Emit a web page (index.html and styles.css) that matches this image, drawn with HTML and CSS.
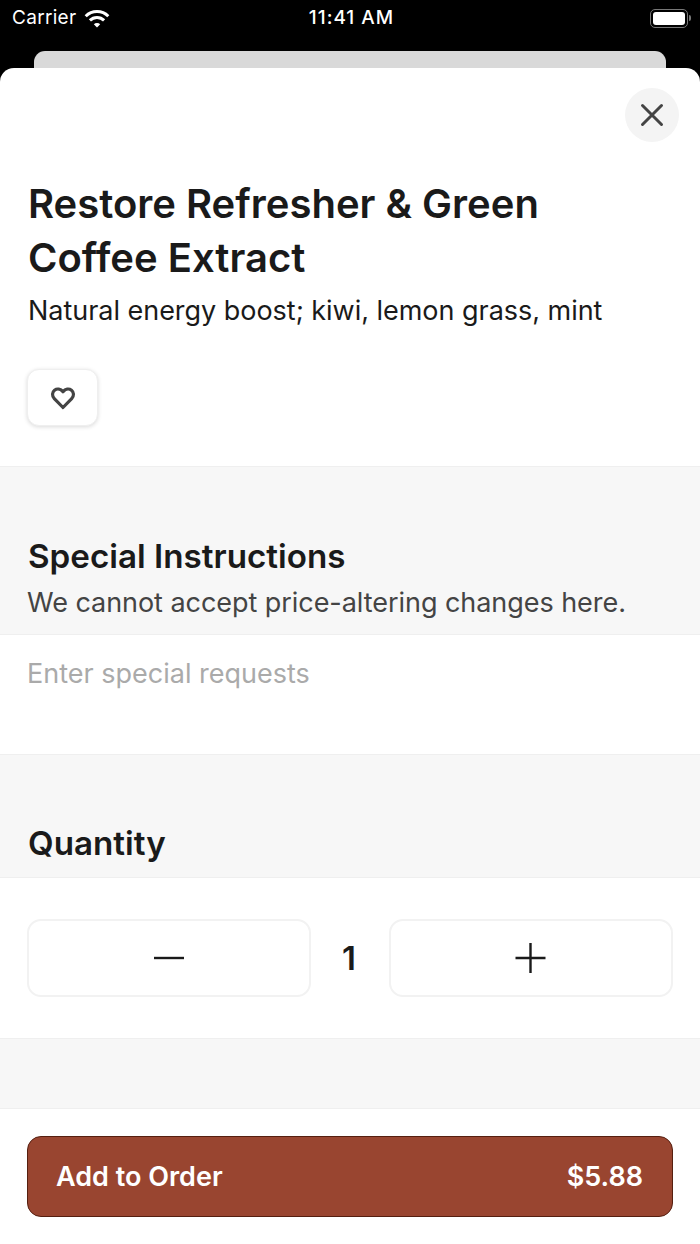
FILE: index.html
```html
<!DOCTYPE html>
<html lang="en">
<head>
  <meta charset="UTF-8">
  <meta name="viewport" content="width=device-width, initial-scale=1">
  <title>Restore Refresher &amp; Green Coffee Extract</title>
  <link rel="stylesheet" href="styles.css">
</head>
<body>
  <div class="screen">
    <header class="status-bar">
      <div class="status-left">
        <span class="carrier">Carrier</span>
        <svg class="wifi" width="26" height="20" viewBox="0 0 26 20">
          <path d="M1.700 8.200A16 16 0 0 1 24.300 8.200M5.900 12.400A10 10 0 0 1 20.100 12.400" stroke="#fff" stroke-width="3" fill="none"/>
          <path d="M13 19.500L9.800 16.300A4.500 4.500 0 0 1 16.200 16.300Z" fill="#fff"/>
        </svg>
      </div>
      <div class="status-time">11:41 AM</div>
      <div class="status-right">
        <div class="battery"><div class="battery-fill"></div></div>
        <div class="battery-cap"></div>
      </div>
    </header>

    <div class="back-card"></div>

    <main class="sheet">
      <section class="item">
        <div class="close-row">
          <button class="close-btn" type="button">
            <svg width="24" height="24" viewBox="0 0 24 24"><path d="M2.500 2.500L21.500 21.500M21.500 2.500L2.500 21.500" stroke="#444" stroke-width="3" stroke-linecap="round" fill="none"/></svg>
          </button>
        </div>
        <h1 class="item-title">Restore Refresher &amp; Green Coffee Extract</h1>
        <p class="item-desc">Natural energy boost; kiwi, lemon grass, mint</p>
        <button class="fav-btn" type="button">
          <svg width="26" height="24" viewBox="0 0 26 24"><path d="M13 21.500L4.300 12.600C1.800 10 2 6.200 4.500 4.200C7 2.300 10.500 2.700 13 5.800C15.500 2.700 19 2.300 21.500 4.200C24 6.200 24.200 10 21.700 12.600Z" stroke="#444" stroke-width="3.200" stroke-linejoin="round" fill="none"/></svg>
        </button>
      </section>

      <section class="label-band instructions-band">
        <h2>Special Instructions</h2>
        <p>We cannot accept price-altering changes here.</p>
      </section>

      <section class="requests">Enter special requests</section>

      <section class="label-band quantity-band">
        <h2>Quantity</h2>
      </section>

      <section class="quantity">
        <button class="qty-btn" type="button">
          <svg width="32" height="32" viewBox="0 0 32 32"><path d="M1 16H31" stroke="#1a1a1a" stroke-width="2.400"/></svg>
        </button>
        <span class="qty-value">1</span>
        <button class="qty-btn" type="button">
          <svg width="32" height="32" viewBox="0 0 32 32"><path d="M0.500 16H30.500M15.500 1V31" stroke="#1a1a1a" stroke-width="2.400"/></svg>
        </button>
      </section>

      <div class="spacer"></div>

      <footer class="order-bar">
        <button class="order-btn" type="button">
          <span>Add to Order</span>
          <span>$5.88</span>
        </button>
      </footer>
    </main>
  </div>
</body>
</html>
```

FILE: styles.css
```css
/* Basic reset and styling */
* {
  box-sizing: border-box;
}
body {
  margin: 0;
  padding: 0;
  background-color: #000;
  font-family: Inter, "Liberation Sans", sans-serif;
  color: #1a1a1a;
}
button {
  font-family: inherit;
  padding: 0;
  cursor: pointer;
}
.screen {
  width: 700px;
  height: 1244px;
  display: flex;
  flex-direction: column;
  overflow: hidden;
  background-color: #000;
}

/* Status bar */
.status-bar {
  height: 51px;
  flex: none;
  display: grid;
  grid-template-columns: 1fr auto 1fr;
  align-items: start;
  padding: 6px 9px 0 12px;
  color: #fff;
  font-size: 19px;
  line-height: 24px;
}
.status-left {
  display: flex;
  align-items: center;
  gap: 8px;
}
.carrier {
  letter-spacing: 0.3px;
}
.wifi {
  margin-top: -1px;
}
.status-time {
  font-weight: 500;
  letter-spacing: 1px;
}
.status-right {
  display: flex;
  align-items: center;
  justify-content: flex-end;
  gap: 1px;
  height: 24px;
}
.battery {
  width: 38px;
  height: 19px;
  padding: 2px;
  border: 1px solid #777;
  border-radius: 5px;
}
.battery-fill {
  height: 100%;
  background-color: #fff;
  border-radius: 3px;
}
.battery-cap {
  width: 2px;
  height: 6px;
  background-color: #777;
  border-radius: 0 2px 2px 0;
}

/* Stacked card behind the sheet */
.back-card {
  height: 17px;
  flex: none;
  margin: 0 34px;
  background-color: #d9d9d9;
  border-radius: 11px 11px 0 0;
}
.sheet {
  flex: 1;
  display: flex;
  flex-direction: column;
  background-color: #fff;
  border-radius: 14px 14px 0 0;
  overflow: hidden;
}

/* Item header */
.item {
  height: 399px;
  flex: none;
  padding: 20px 21px 0 27px;
  border-bottom: 1px solid #efefef;
}
.close-row {
  display: flex;
  justify-content: flex-end;
  height: 54px;
}
.close-btn {
  width: 54px;
  height: 54px;
  display: flex;
  align-items: center;
  justify-content: center;
  background-color: #f4f4f4;
  border: none;
  border-radius: 50%;
}
.item-title {
  margin: 35px 0 0 1px;
  max-width: 600px;
  font-size: 40px;
  line-height: 54px;
  font-weight: 600;
}
.item-desc {
  margin: 9px 0 0;
  padding-left: 1px;
  font-size: 27px;
  line-height: 34px;
  letter-spacing: -0.03px;
}
.fav-btn {
  display: flex;
  align-items: center;
  justify-content: center;
  width: 71px;
  height: 57px;
  margin-top: 41px;
  background-color: #fff;
  border: 1px solid #efefef;
  border-radius: 12px;
  box-shadow: 0 1px 4px rgba(0,0,0,0.15);
}

/* Grey label bands */
.label-band {
  flex: none;
  padding: 0 27px;
  background-color: #f7f7f7;
  border-bottom: 1px solid #efefef;
}
.label-band h2 {
  margin: 0 0 0 1px;
  font-size: 33.2px;
  line-height: 40px;
  font-weight: 600;
}
.label-band p {
  margin: 10px 0 0;
  font-size: 27px;
  line-height: 34px;
  letter-spacing: -0.05px;
  color: #444;
}
.instructions-band {
  height: 168px;
  padding-top: 69px;
}
.quantity-band {
  height: 123px;
  padding-top: 68px;
}

/* Special requests field */
.requests {
  height: 120px;
  flex: none;
  padding: 22px 27px 0;
  font-size: 27px;
  line-height: 34px;
  color: #aaa;
  border-bottom: 1px solid #efefef;
}

/* Quantity stepper */
.quantity {
  height: 161px;
  flex: none;
  display: grid;
  grid-template-columns: 1fr 78px 1fr;
  align-items: start;
  padding: 41px 27px 0;
  border-bottom: 1px solid #efefef;
}
.qty-btn {
  height: 78px;
  display: flex;
  align-items: center;
  justify-content: center;
  background-color: #fff;
  border: 2px solid #f2f2f2;
  border-radius: 14px;
}
.qty-value {
  padding-right: 2px;
  font-size: 33px;
  line-height: 78px;
  font-weight: 600;
  text-align: center;
}

.spacer {
  flex: 1;
  background-color: #f7f7f7;
}

/* Order footer */
.order-bar {
  height: 136px;
  flex: none;
  padding: 27px 27px 0;
  background-color: #fff;
  border-top: 1px solid #efefef;
}
.order-btn {
  width: 100%;
  height: 81px;
  display: flex;
  align-items: center;
  justify-content: space-between;
  padding: 0 29px 0 28px;
  background-color: #994530;
  border: 1.5px solid #551f10;
  border-radius: 14px;
  color: #fff;
  font-size: 27px;
  font-weight: 600;
}
```
